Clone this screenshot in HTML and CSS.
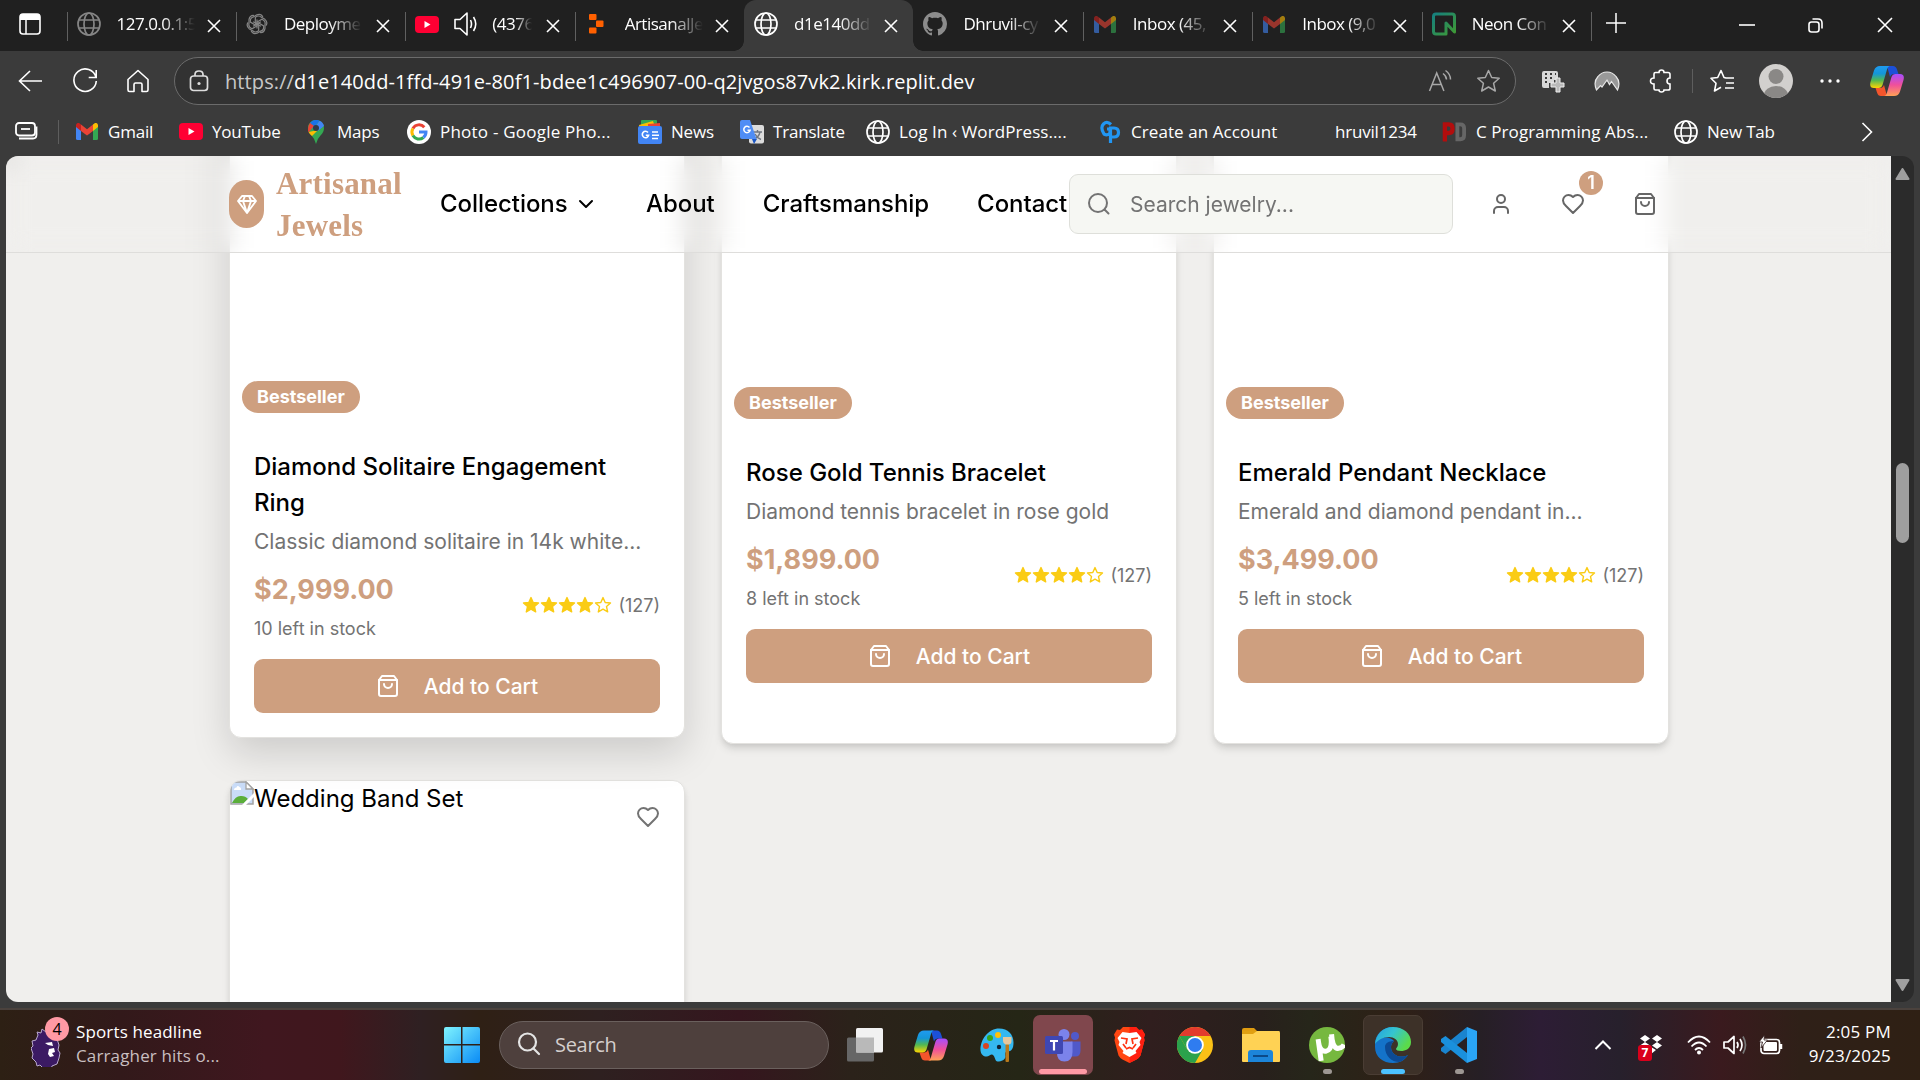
FILE: index.html
```html
<!DOCTYPE html>
<html lang="en">
<head>
<meta charset="utf-8">
<title>Artisanal Jewels</title>
<link rel="stylesheet" href="styles.css">
</head>
<body>
<svg class="defs" width="0" height="0">
  <defs>
    <symbol id="globe" viewBox="0 0 24 24"><g fill="none" stroke="currentColor" stroke-width="1.7"><circle cx="12" cy="12" r="11"/><ellipse cx="12" cy="12" rx="5" ry="11"/><path d="M2 8h20M2 16h20"/></g></symbol>
    <symbol id="x" viewBox="0 0 14 14"><path d="M1 1l12 12M13 1L1 13" stroke="currentColor" stroke-width="1.6" fill="none"/></symbol>
    <symbol id="gmail" viewBox="0 0 22 17"><path d="M0 3v12.500Q0 17 1.500 17H5V7z" fill="#4285f4"/><path d="M17 7v10h3.500q1.500 0 1.500-1.500V3z" fill="#34a853"/><path d="M17 1.500V8l5-4V2q-.5-2.500-3-2z" fill="#fbbc04"/><path d="M5 1.500V8L0 4V2Q.5-.5 3 0z" fill="#c5221f"/><path d="M5 8V1.500l6 4.700 6-4.700V8l-6 4.600z" fill="#ea4335"/></symbol>
    <symbol id="youtube" viewBox="0 0 24 17"><rect width="24" height="17" rx="4" fill="#ff0033"/><path d="M9.500 5v7l6-3.500z" fill="#fff"/></symbol>
    <symbol id="bag" viewBox="0 0 24 24"><g fill="none" stroke="currentColor" stroke-width="2" stroke-linecap="round" stroke-linejoin="round"><path d="M6 2 3 6v14a2 2 0 0 0 2 2h14a2 2 0 0 0 2-2V6l-3-4Z"/><path d="M3 6h18M16 10a4 4 0 0 1-8 0"/></g></symbol>
    <symbol id="heart" viewBox="0 0 24 24"><path d="M19 14c1.490-1.460 3-3.210 3-5.500A5.500 5.500 0 0 0 16.500 3c-1.760 0-3 .5-4.500 2-1.500-1.500-2.740-2-4.500-2A5.500 5.500 0 0 0 2 8.500c0 2.300 1.500 4.050 3 5.500l7 7Z" fill="none" stroke="currentColor" stroke-width="2" stroke-linejoin="round"/></symbol>
    <symbol id="star" viewBox="0 0 18 18"><path d="M9 1.600l2.200 4.900 5.300.5-4 3.600 1.200 5.300L9 13.200l-4.700 2.700 1.200-5.300-4-3.600 5.300-.5z" fill="#facc15" stroke="#facc15" stroke-width="1.400" stroke-linejoin="round"/></symbol>
    <symbol id="star-empty" viewBox="0 0 18 18"><path d="M9 1.600l2.200 4.900 5.300.5-4 3.600 1.200 5.300L9 13.200l-4.700 2.700 1.200-5.300-4-3.600 5.300-.5z" fill="none" stroke="#facc15" stroke-width="1.400" stroke-linejoin="round"/></symbol>
    <linearGradient id="cpA" x1="0" y1="0" x2="0" y2="1"><stop offset="0" stop-color="#1f9bf0"/><stop offset=".35" stop-color="#1496d8"/><stop offset=".65" stop-color="#52b852"/><stop offset="1" stop-color="#ffd500"/></linearGradient>
    <linearGradient id="cpB" x1="0" y1="0" x2="0" y2="1"><stop offset="0" stop-color="#a64dff"/><stop offset=".5" stop-color="#f0509a"/><stop offset="1" stop-color="#ffa256"/></linearGradient>
    <symbol id="copilot" viewBox="0 0 34 30"><path d="M17 0h6q3 0 4 3.500L28.500 8H24q-3 0-4 3z" fill="#1c50d8"/><path d="M17 30h-6q-3 0-4-3.500L5.500 22H10q3 0 4-3z" fill="#f4552c"/><path d="M10 0h10q-2 0-3 3.500L12.500 19q-1 3-4 3H4q-5 0-3.500-6L4 4.500Q5.500 0 10 0z" fill="url(#cpA)"/><path d="M24 30H14q2 0 3-3.500L21.500 11q1-3 4-3H30q5 0 3.500 6L30 25.500Q28.500 30 24 30z" fill="url(#cpB)"/></symbol>
    <linearGradient id="win" x1="0" y1="0" x2="1" y2="1"><stop offset="0" stop-color="#7ff4ff"/><stop offset="1" stop-color="#0a8bf5"/></linearGradient>
    <linearGradient id="edgeTop" x1="0" y1="0" x2="1" y2=".5"><stop offset="0" stop-color="#23a0e0"/><stop offset=".5" stop-color="#35c4d0"/><stop offset="1" stop-color="#5bdb4a"/></linearGradient>
  </defs>
</svg>

<div class="tabstrip">
  <div class="workspace"><svg width="22" height="22" viewBox="0 0 22 22"><rect x="1" y="1" width="20" height="20" rx="3" fill="none" stroke="#fff" stroke-width="1.600"/><path d="M1 4q0-3 3-3h14q3 0 3 3v3H1z" fill="#fff"/><path d="M7 7v14" stroke="#fff" stroke-width="1.500"/></svg></div>
  <div class="tab"><svg class="fav dim" width="24" height="24"><use href="#globe"/></svg><span class="title">127.0.0.1:5</span><svg class="x" width="14" height="14"><use href="#x"/></svg></div>
  <div class="tab"><svg class="fav dim" width="22" height="22" viewBox="0 0 22 22"><g fill="none" stroke="currentColor" stroke-width="1.200"><path d="M11 6.500V13l-5 2.800Q2 14 3 10.500V6.500Q4 2 8 2.500"/><path d="M11 6.500V13l-5 2.800Q2 14 3 10.500V6.500Q4 2 8 2.500" transform="rotate(60 11 11)"/><path d="M11 6.500V13l-5 2.800Q2 14 3 10.500V6.500Q4 2 8 2.500" transform="rotate(120 11 11)"/><path d="M11 6.500V13l-5 2.800Q2 14 3 10.500V6.500Q4 2 8 2.500" transform="rotate(180 11 11)"/><path d="M11 6.500V13l-5 2.800Q2 14 3 10.500V6.500Q4 2 8 2.500" transform="rotate(240 11 11)"/><path d="M11 6.500V13l-5 2.800Q2 14 3 10.500V6.500Q4 2 8 2.500" transform="rotate(300 11 11)"/></g></svg><span class="title">Deployme</span><svg class="x" width="14" height="14"><use href="#x"/></svg></div>
  <div class="tab"><svg class="fav" width="24" height="17"><use href="#youtube"/></svg><svg class="sound" width="24" height="26" viewBox="0 0 24 26"><g fill="none" stroke="#fff" stroke-width="1.600"><path d="M1 8.500h5L13 2v22l-7-6.500H1z" stroke-linejoin="round"/><path d="M16.500 9q2 4 0 8M19.500 6q4.500 7 0 14"/></g></svg><span class="title short">(4376</span><svg class="x" width="14" height="14"><use href="#x"/></svg></div>
  <div class="tab last"><svg class="fav" width="24" height="20" viewBox="0 0 24 20"><g fill="#ff6000"><rect x="4" y="0" width="7.500" height="6" rx="1"/><rect x="11" y="6.500" width="7.500" height="6.500" rx="1"/><rect x="4" y="13.500" width="7.500" height="6" rx="1"/></g></svg><span class="title">ArtisanalJe</span><svg class="x" width="14" height="14"><use href="#x"/></svg></div>
  <div class="tab active"><svg class="fav" width="24" height="24"><use href="#globe"/></svg><span class="title">d1e140dd</span><svg class="x" width="14" height="14"><use href="#x"/></svg></div>
  <div class="tab bare"><svg class="fav github" width="24" height="24" viewBox="0 0 16 16"><path fill="#8c8c8c" d="M8 0C3.580 0 0 3.580 0 8c0 3.540 2.290 6.530 5.470 7.590.4.070.55-.17.55-.38 0-.19-.01-.82-.01-1.490-2.010.37-2.530-.49-2.690-.94-.09-.23-.48-.94-.82-1.130-.28-.15-.68-.52-.01-.53.63-.01 1.080.58 1.230.82.720 1.210 1.870.87 2.330.66.07-.52.28-.87.51-1.070-1.780-.2-3.640-.89-3.640-3.950 0-.87.31-1.590.82-2.150-.08-.2-.36-1.020.08-2.120 0 0 .67-.21 2.200.82.640-.18 1.320-.27 2-.27s1.360.09 2 .27c1.530-1.040 2.200-.82 2.200-.82.44 1.100.16 1.920.08 2.120.51.56.82 1.270.82 2.150 0 3.070-1.870 3.750-3.650 3.950.29.25.54.73.54 1.480 0 1.070-.01 1.930-.01 2.200 0 .21.15.46.55.38A8.010 8.010 0 0 0 16 8c0-4.420-3.580-8-8-8"/></svg><span class="title">Dhruvil-cy</span><svg class="x" width="14" height="14"><use href="#x"/></svg></div>
  <div class="tab"><svg class="fav faded" width="24" height="17"><use href="#gmail"/></svg><span class="title">Inbox (45,</span><svg class="x" width="14" height="14"><use href="#x"/></svg></div>
  <div class="tab"><svg class="fav faded" width="24" height="17"><use href="#gmail"/></svg><span class="title">Inbox (9,0</span><svg class="x" width="14" height="14"><use href="#x"/></svg></div>
  <div class="tab"><svg class="fav" width="24" height="24" viewBox="0 0 24 24"><linearGradient id="neon" x1="0" y1="0" x2="1" y2="1"><stop offset="0" stop-color="#16807e"/><stop offset="1" stop-color="#3f9a34"/></linearGradient><path d="M14 22H4q-2.500 0-2.500-2.500v-15Q1.500 2 4 2h16q2.500 0 2.500 2.500V20L14 11z" fill="none" stroke="url(#neon)" stroke-width="3" stroke-linejoin="round"/></svg><span class="title">Neon Con</span><svg class="x" width="14" height="14"><use href="#x"/></svg></div>
  <div class="newtab"><svg width="20" height="20" viewBox="0 0 20 20"><path d="M10 0v20M0 10h20" stroke="#fff" stroke-width="1.500"/></svg></div>
  <div class="winctl">
    <svg width="16" height="16" viewBox="0 0 16 16"><path d="M0 8h16" stroke="#fff" stroke-width="1.600"/></svg>
    <svg width="16" height="16" viewBox="0 0 16 16"><g fill="none" stroke="#fff" stroke-width="1.600"><rect x="1" y="5" width="10" height="10" rx="2.500"/><path d="M4.500 2h5.500q4 0 4 4v5.500"/></g></svg>
    <svg width="16" height="16" viewBox="0 0 16 16"><path d="M1 1l14 14M15 1L1 15" stroke="#fff" stroke-width="1.600"/></svg>
  </div>
</div>

<div class="toolbar">
  <div class="nav">
    <svg width="26" height="24" viewBox="0 0 26 24"><path d="M13 2L2.500 12 13 22M2.500 12H25" fill="none" stroke="#fff" stroke-width="1.600"/></svg>
    <svg width="26" height="26" viewBox="0 0 26 26"><path d="M24 9.500A11.200 11.200 0 1 0 24.300 13M24.200 2v7.500h-7.500" fill="none" stroke="#fff" stroke-width="1.600"/></svg>
    <svg width="24" height="24" viewBox="0 0 24 24"><path d="M2 10.500L12 1.500l10 9V21q0 1.500-1.500 1.500h-4.500v-7q0-1.500-1.500-1.500h-5Q8 14 8 15.500v7H3.500Q2 22.500 2 21z" fill="none" stroke="#fff" stroke-width="1.600" stroke-linejoin="round"/></svg>
  </div>
  <div class="address">
    <svg width="20" height="22" viewBox="0 0 20 22"><g fill="none" stroke="#ddd" stroke-width="1.700"><rect x="1.500" y="6" width="17" height="14.500" rx="3"/><path d="M6 6V4.500Q6 1 10 1t4 3.500V6"/></g><circle cx="10" cy="13.500" r="1.600" fill="#ddd"/></svg>
    <span class="url"><span class="scheme">https://</span>d1e140dd-1ffd-491e-80f1-bdee1c496907-00-q2jvgos87vk2.kirk.replit.dev</span>
    <svg class="read" width="24" height="24" viewBox="0 0 24 24"><path d="M1.500 22L8.700 4l7.200 18M4 15.500h9.500M15 4.500q3.500 2.500 3.500 6M17.500 1.500q5 3.500 5 9" fill="none" stroke="#a8a8a8" stroke-width="1.500"/></svg>
    <svg width="25" height="24" viewBox="0 0 24 24"><path d="M12 1.500l3.200 7 7.500.8-5.600 5 1.700 7.700L12 18l-6.800 4 1.700-7.700-5.600-5 7.500-.8z" fill="none" stroke="#a8a8a8" stroke-width="1.500" stroke-linejoin="round"/></svg>
  </div>
  <div class="exts">
    <svg width="24" height="24" viewBox="0 0 24 24"><path d="M1 4q0-2 2-2h12q2 0 2 2v7h-4v3H8v5H3q-2 0-2-2z" fill="#d8d8d8"/><path d="M4 5h2m3 0h2m3 0h1M4 9h2m3 0h2M4 13h2" stroke="#3b3b3b" stroke-width="2"/><path d="M15 9h4v5h4v4h-4v5h-4v-5h-5v-4h5z" fill="#b9b9b9" stroke="#eee" stroke-width="1"/></svg>
    <svg width="26" height="24" viewBox="0 0 26 24"><path d="M2.500 21Q-1 13 4 7.500 7.500 3 13 3t9 4.500Q27 13 23.500 21l-6-8.500-2 3L13 11l-5 7-1.500-1.500z" fill="#999" stroke="#e8e8e8" stroke-width="1.200"/></svg>
    <svg width="24" height="24" viewBox="0 0 24 24"><path d="M5 5q0-1.500 1.500-1.500H10Q10 1 12.500 1T15 3.500h4q2 0 2 2V9q-3 0-3 3t3 3v4.500q0 1.500-2 1.500h-4q0 2-2.500 2T10 21H6.500Q5 21 5 19.500V15q-3.500 0-3.500-3T5 9z" fill="none" stroke="#fff" stroke-width="1.600"/></svg>
    <i class="sep"></i>
    <svg width="25" height="24" viewBox="0 0 25 24"><path d="M16 9L14 8.500 11 1.500 7.700 8.500 1 9.300l5 5L4.500 22l6.500-3.800M15 9h9M16 14h8M15 19h9" fill="none" stroke="#fff" stroke-width="1.600" stroke-linejoin="round"/></svg>
    <svg width="34" height="34" viewBox="0 0 34 34"><clipPath id="av"><circle cx="17" cy="17" r="17"/></clipPath><g clip-path="url(#av)"><rect width="34" height="34" fill="#d2d0ce"/><circle cx="17" cy="12.500" r="7.500" fill="#8a8886"/><ellipse cx="17" cy="31" rx="12" ry="9" fill="#8a8886"/></g></svg>
    <svg width="20" height="6" viewBox="0 0 20 6"><g fill="#fff"><circle cx="2" cy="3" r="1.700"/><circle cx="10" cy="3" r="1.700"/><circle cx="18" cy="3" r="1.700"/></g></svg>
    <svg width="34" height="30"><use href="#copilot"/></svg>
  </div>
</div>

<div class="bookmarks">
  <div class="stack"><svg width="24" height="20" viewBox="0 0 24 20"><g fill="none" stroke="#fff" stroke-width="1.800"><rect x="1" y="1" width="19" height="12.500" rx="3"/><path d="M6 7h9"/><path d="M4 16.500h14q3.500 0 3.500-4V4.500"/></g></svg></div>
  <i class="sep"></i>
  <div class="marks">
    <div class="mark"><svg width="24" height="17"><use href="#gmail"/></svg><span>Gmail</span></div>
    <div class="mark"><svg width="24" height="17"><use href="#youtube"/></svg><span>YouTube</span></div>
    <div class="mark"><svg width="24" height="24" viewBox="0 0 24 24"><path d="M12 24Q11 19 7.500 15.500 4 12 4 8a8 8 0 0 1 16 0q0 4-3.500 7.500Q13 19 12 24z" fill="#34a853"/><path d="M6 3a8 8 0 0 1 9.500-2.300L9 9z" fill="#1a73e8"/><path d="M6 3l4 3-5.500 6.500Q3 7 6 3z" fill="#ea4335"/><path d="M4.600 12L14 10l-6 6q-2.500-2-3.400-4z" fill="#fbbc04"/><path d="M15.500.7Q19 2 20 6l-6 5-3-4z" fill="#4285f4"/><circle cx="12" cy="8" r="3" fill="#303a48"/></svg><span>Maps</span></div>
    <div class="mark looser"><svg width="24" height="24" viewBox="0 0 24 24"><circle cx="12" cy="12" r="12" fill="#fff"/><g fill="none" stroke-width="3"><path d="M17.300 7.200A7 7 0 0 0 5.900 8.500" stroke="#ea4335"/><path d="M5.900 8.500a7 7 0 0 0 0 7" stroke="#fbbc04"/><path d="M5.900 15.500a7 7 0 0 0 10.500 2" stroke="#34a853"/><path d="M16.400 17.500A7 7 0 0 0 19 12h-7" stroke="#4285f4"/></g></svg><span>Photo - Google Pho...</span></div>
    <div class="mark"><svg width="24" height="24" viewBox="0 0 24 24"><rect x="3" y="0" width="16" height="8" rx="1" fill="#34a853"/><path d="M1 5l14-4 3 9H2z" fill="#fbbc04"/><path d="M10 4l12-1v8H10z" fill="#ea4335"/><rect y="6" width="24" height="18" rx="2" fill="#4285f4"/><path d="M10 12.500a3.200 3.200 0 1 0 .6 2.800H7.800M14 12h6M14 15.300h7M14 18.500h6" fill="none" stroke="#fff" stroke-width="1.600"/></svg><span>News</span></div>
    <div class="mark"><svg width="24" height="24" viewBox="0 0 24 24"><rect x="9" y="5" width="15" height="18.500" rx="2" fill="#dcdcdc"/><path d="M13 12h9M17.500 10v2M20 12q-1 5-6 7M15 14q2 4 6 5.500" fill="none" stroke="#6f7680" stroke-width="1.400"/><path d="M12 19h5l-3 5z" fill="#1a56c4"/><path d="M2 0h8l6.500 19H2q-2 0-2-2V2q0-2 2-2z" fill="#4f8df5"/><path d="M9.500 7.500a3.200 3.200 0 1 0 .6 2.800H7.500" fill="none" stroke="#fff" stroke-width="1.500"/></svg><span>Translate</span></div>
    <div class="mark loose"><svg width="24" height="24"><use href="#globe"/></svg><span>Log In ‹ WordPress....</span></div>
    <div class="mark loose"><svg width="24" height="24" viewBox="0 0 24 24"><path d="M13 4.500Q9 .5 5.500 4T6 14q3.500 2 6-1V9H9M12.500 23V8h3.500q4.500 0 4.500 4.500T16 17h-3" fill="none" stroke="#2196f3" stroke-width="3.200"/></svg><span>Create an Account</span></div>
    <div class="mark"><svg width="24" height="24"></svg><span>hruvil1234</span></div>
    <div class="mark loose"><svg width="25" height="22" viewBox="0 0 26 22"><path d="M3 21V3h4q4 0 4 4.500T7 12H3" fill="none" stroke="#b30d0d" stroke-width="4.500"/><path d="M16 3h3q4 0 4 4v7q0 4.500-4 4.500h-3z" fill="none" stroke="#666" stroke-width="4"/></svg><span>C Programming Abs...</span></div>
    <div class="mark"><svg width="24" height="24"><use href="#globe"/></svg><span>New Tab</span></div>
  </div>
  <svg width="12" height="20" viewBox="0 0 12 20"><path d="M1.500 1l9 9-9 9" fill="none" stroke="#fff" stroke-width="1.600"/></svg>
</div>

<div class="frame">
  <div class="viewport">
    <header class="site-header">
      <div class="container bar">
        <div class="logo"><svg width="24" height="24" viewBox="0 0 24 24"><path d="M7 4h10l4 5-9 12L3 9zM3 9h18M10 4L8 9l4 12 4-12-2-5" fill="none" stroke="#fff" stroke-width="1.900" stroke-linejoin="round"/></svg></div>
        <div class="brand">Artisanal<br>Jewels</div>
        <nav class="menu">
          <span class="collections"><span>Collections</span> <svg width="24" height="24" viewBox="0 0 24 24"><path d="M6 9l6 6 6-6" fill="none" stroke="#000" stroke-width="2" stroke-linecap="round" stroke-linejoin="round"/></svg></span>
          <span>About</span><span>Craftsmanship</span><span>Contact</span>
        </nav>
        <div class="search"><svg width="24" height="24" viewBox="0 0 24 24"><g fill="none" stroke="#737373" stroke-width="2" stroke-linecap="round"><circle cx="11" cy="11" r="9"/><path d="M21.500 21.500l-4-4"/></g></svg><span>Search jewelry...</span></div>
        <div class="actions">
          <span class="act"><svg width="24" height="24" viewBox="0 0 24 24"><g fill="none" stroke="#666" stroke-width="2" stroke-linecap="round"><circle cx="12" cy="7" r="4"/><path d="M19 21v-2a4 4 0 0 0-4-4H9a4 4 0 0 0-4 4v2"/></g></svg></span>
          <span class="act"><svg width="24" height="24"><use href="#heart"/></svg><b class="count">1</b></span>
          <span class="act"><svg width="24" height="24"><use href="#bag"/></svg></span>
        </div>
      </div>
    </header>
    <main class="container grid">
      <article class="card hovered">
        <div class="photo"><span class="badge">Bestseller</span></div>
        <div class="body">
          <h3>Diamond Solitaire Engagement Ring</h3>
          <p class="desc">Classic diamond solitaire in 14k white...</p>
          <div class="row"><div><div class="price">$2,999.00</div><div class="stock">10 left in stock</div></div>
            <div class="rating"><svg width="18" height="18"><use href="#star"/></svg><svg width="18" height="18"><use href="#star"/></svg><svg width="18" height="18"><use href="#star"/></svg><svg width="18" height="18"><use href="#star"/></svg><svg width="18" height="18"><use href="#star-empty"/></svg><span>(127)</span></div></div>
          <button class="add"><svg width="24" height="24"><use href="#bag"/></svg><span>Add to Cart</span></button>
        </div>
      </article>
      <article class="card">
        <div class="photo"><span class="badge">Bestseller</span></div>
        <div class="body">
          <h3>Rose Gold Tennis Bracelet</h3>
          <p class="desc">Diamond tennis bracelet in rose gold</p>
          <div class="row"><div><div class="price">$1,899.00</div><div class="stock">8 left in stock</div></div>
            <div class="rating"><svg width="18" height="18"><use href="#star"/></svg><svg width="18" height="18"><use href="#star"/></svg><svg width="18" height="18"><use href="#star"/></svg><svg width="18" height="18"><use href="#star"/></svg><svg width="18" height="18"><use href="#star-empty"/></svg><span>(127)</span></div></div>
          <button class="add"><svg width="24" height="24"><use href="#bag"/></svg><span>Add to Cart</span></button>
        </div>
      </article>
      <article class="card">
        <div class="photo"><span class="badge">Bestseller</span></div>
        <div class="body">
          <h3>Emerald Pendant Necklace</h3>
          <p class="desc">Emerald and diamond pendant in...</p>
          <div class="row"><div><div class="price">$3,499.00</div><div class="stock">5 left in stock</div></div>
            <div class="rating"><svg width="18" height="18"><use href="#star"/></svg><svg width="18" height="18"><use href="#star"/></svg><svg width="18" height="18"><use href="#star"/></svg><svg width="18" height="18"><use href="#star"/></svg><svg width="18" height="18"><use href="#star-empty"/></svg><span>(127)</span></div></div>
          <button class="add"><svg width="24" height="24"><use href="#bag"/></svg><span>Add to Cart</span></button>
        </div>
      </article>
      <article class="card next">
        <div class="missing"><svg width="24" height="24" viewBox="0 0 24 24"><path d="M1 1h15l7 7v15H1z" fill="#c9dcf8" stroke="#a3a3a3" stroke-width="1.500"/><path d="M16 1v7h7z" fill="#fff" stroke="#a3a3a3" stroke-width="1.300"/><path d="M4 9q0-2.500 2.500-2.500Q7.500 4 9.500 6q2 .5 1.500 3z" fill="#fff"/><path d="M2 22q4-8 9.500-7 4 0 6.500 3l-4 4z" fill="#5aae3a"/><path d="M24 12L12 24h4l8-8z" fill="#fff"/></svg><span>Wedding Band Set</span></div>
        <svg class="wish" width="24" height="24"><use href="#heart"/></svg>
      </article>
    </main>
  </div>
  <div class="scrollbar"><svg width="15" height="12" viewBox="0 0 15 12"><path d="M7.500 1l6 10h-12z" fill="#9f9f9f" stroke="#9f9f9f" stroke-linejoin="round" stroke-width="2"/></svg><i class="thumb"></i><svg width="15" height="12" viewBox="0 0 15 12"><path d="M7.500 11l6-10h-12z" fill="#9f9f9f" stroke="#9f9f9f" stroke-linejoin="round" stroke-width="2"/></svg></div>
</div>

<footer class="taskbar">
  <div class="widget">
    <div class="lion"><svg width="30" height="40" viewBox="0 0 30 40"><path d="M7 8l-1-3 4 1 1-4 4 3 3-2v5l8 4 2 6-1 5 2 3-1 5-2 6-5 2-1 3-8-1-3-3-3 1-1-4-4-4 1-4-2-6 2-2-1-5 4-1z" fill="#3b1a63" stroke="#b9a9cf" stroke-width="1"/><path d="M14 16l7-1 1 4-5-1zM18 22l5-1 1 4-3 1 2 3-4 1-2-3z" fill="#fff"/></svg><b class="alert">4</b></div>
    <div class="news"><div>Sports headline</div><div class="sub">Carragher hits o...</div></div>
  </div>
  <svg width="36" height="36" viewBox="0 0 36 36"><path d="M2 0h15v17H0V2q0-2 2-2zM18.500 0H34q2 0 2 2v15H18.500zM0 18.500h17V36H2q-2 0-2-2zM18.500 18.500H36V34q0 2-2 2H18.500z" fill="url(#win)"/></svg>
  <div class="tsearch"><svg width="24" height="24" viewBox="0 0 24 24"><g fill="none" stroke="#e4e4e4" stroke-width="2.200" stroke-linecap="round"><circle cx="10.500" cy="10" r="8.500"/><path d="M16.500 16.500l5.500 5.500"/></g></svg><span>Search</span></div>
  <div class="apps">
    <div class="app"><svg width="36" height="34" viewBox="0 0 36 34"><rect y="9.500" width="27" height="24" rx="1.500" fill="#666"/><rect x="9" width="27" height="24.500" rx="1.500" fill="#f1f1f1"/><path d="M9 9.500h18v15H9z" fill="#b9b9b9"/></svg></div>
    <div class="app"><svg width="34" height="31"><use href="#copilot"/></svg></div>
    <div class="app"><svg width="34" height="34" viewBox="0 0 34 34"><path d="M19 .5c9 0 14.500 6 14.500 14 0 6-2 9-6 9-3 0-2 3-2 5 0 3-4 5-8 5-2 0-2-3-4-6s-4 1-7 1-5.500-2-6-6C0 11 9 .5 19 .5z" fill="#35b8f0"/><circle cx="18" cy="7" r="3" fill="#ffc107"/><circle cx="10" cy="10" r="3" fill="#34a51f"/><circle cx="6" cy="18" r="3" fill="#d9441f"/><circle cx="19" cy="19" r="2.200" fill="#123"/><rect x="25.500" y="16" width="3.500" height="18" rx="1" fill="#b97a1c"/><path d="M23 9h8.500v4q0 3-2.500 3.500h-3.500q-2.500-1-2.500-3.500z" fill="#e5c79d"/></svg></div>
    <div class="app teams"><svg width="36" height="33" viewBox="0 0 36 33"><circle cx="30" cy="7" r="4" fill="#5059c9"/><path d="M26 12.500h9.500v9q0 6-5 6h-4.500z" fill="#5059c9"/><circle cx="19" cy="5.500" r="5.500" fill="#7b83eb"/><path d="M12 12.500h15.500V23q0 9.500-8 9.500T12 23z" fill="#7b83eb"/><rect y="7" width="18" height="18" rx="1.500" fill="#3f47b3"/><path d="M5 12h8M9 12v9.500" stroke="#fff" stroke-width="2.200"/></svg><i></i></div>
    <div class="app"><svg width="31" height="36" viewBox="0 0 31 36"><path d="M9 0h13l3 3 3-.5 3 5-1 3 .5 3-4 15q-1 2-4 4L15.500 36l-7-3.500q-3-2-4-4l-4-15 .5-3-1-3 3-5L6 3z" fill="#ff4612"/><path d="M15.500 0H22l3 3 3-.5 3 5-1 3 .5 3-4 15q-1 2-4 4L15.500 36z" fill="#ff1e10"/><path d="M15.500 6l7-1 5 6-2 4 1 3-5 6 1 2-7 4-7-4 1-2-5-6 1-3-2-4 5-6z" fill="#fff"/><path d="M7 11l6 1-1 5M24 11l-6 1 1 5M12 22l3.500-1.500L19 22M9 17l3 4M22 17l-3 4" fill="none" stroke="#ff3311" stroke-width="1.700"/></svg></div>
    <div class="app"><svg width="36" height="36" viewBox="0 0 36 36"><circle cx="18" cy="18" r="18" fill="#fbc116"/><path d="M2.400 9A18 18 0 0 1 33.600 9H18z" fill="#e33b2e"/><path d="M2.400 9A18 18 0 0 0 18 36l7.800-13.500H10.200z" fill="#2ba24c"/><path d="M2.400 9l7.800 13.500L18 9z" fill="#2ba24c"/><circle cx="18" cy="18" r="8.800" fill="#fff"/><circle cx="18" cy="18" r="7" fill="#2f7cf0"/></svg></div>
    <div class="app"><svg width="38" height="34" viewBox="0 0 38 34"><path d="M0 2q0-2 2-2h10l4 4H0z" fill="#e09c10"/><path d="M0 6V4q0-1 2-1h35q1 0 1 2v28q0 1-1 1H1q-1 0-1-1z" fill="#ffd254"/><path d="M0 6h11l4-3H0z" fill="#e0a012"/><path d="M6 34V25q0-3 3-3h19q3 0 3 3v9z" fill="#1c85da"/><path d="M11 28h15" stroke="#0b4a8a" stroke-width="2"/></svg></div>
    <div class="app"><svg width="36" height="36" viewBox="0 0 36 36"><circle cx="18" cy="18" r="18" fill="#76b83f"/><path d="M10 11v22M10 14q0 10 6 10 7 0 7-14M24 8q-1 13 4 15 5 0 7-3" fill="none" stroke="#fff" stroke-width="5" transform="rotate(-8 18 18)"/></svg><i></i></div>
    <div class="app edge"><svg width="36" height="36" viewBox="0 0 36 36"><path d="M18 0C7 0 0 8 0 17v3C0 30 8 36 18 36c7 0 12-3 15-8-8 4-17 0-17-8 0-3 2-5 3-6-4-5-14-5-19 3" fill="#1473c9"/><path d="M10 20c0 9 7 15 14 15 4-1 7-4 9-7-8 4-17 0-17-8 0-3 1-4 3-6-5 0-9 2-9 6z" fill="#0c4a94"/><path d="M0 17C1 7 8 0 18 0c11 0 18 7 18 15 0 7-6 9-10 9-3 0-5-1-5-2s2-2 2-5c0-4-4-7-9-7-6 0-11 3-14 7z" fill="url(#edgeTop)"/></svg><i></i></div>
    <div class="app"><svg width="36" height="36" viewBox="0 0 36 36"><path d="M26 0l10 4v28l-10 4z" fill="#2aa4f4"/><path d="M26 0v10L4.500 27 0 24v-3z" fill="#1a84cf"/><path d="M26 36V26L4.500 9 0 12v3z" fill="#1a90dd"/></svg><i></i></div>
  </div>
  <div class="tray">
    <svg width="18" height="12" viewBox="0 0 18 12"><path d="M1.500 10L9 2.500l7.500 7.500" fill="none" stroke="#fff" stroke-width="2"/></svg>
    <span class="drop"><svg width="24" height="20" viewBox="0 0 24 20"><path d="M6 0l5 3.500L6 7 1 3.500zM18 0l5 3.500L18 7l-5-3.500zM18 7l5 3.500-5 3.500-5-3.500zM6 7l5 3.500L6 14l-5-3.500zM12 12l5 3-5 4-5-4z" fill="#fff"/></svg><b>7</b></span>
    <svg width="24" height="20" viewBox="0 0 24 20"><g fill="none" stroke="#fff" stroke-width="1.800"><path d="M1 7.500q11-12 22 0M4.500 11.500q7.500-8 15 0M8 15q4-4 8 0"/></g><circle cx="12" cy="17.500" r="2" fill="#fff"/></svg>
    <svg width="24" height="20" viewBox="0 0 24 20"><g fill="none" stroke="#fff" stroke-width="1.700"><path d="M1 7h4l6-5.500v17L5 13H1z" stroke-linejoin="round"/><path d="M14 7q2 3 0 6M17 4q4 6 0 12"/><path d="M20 1.500q5 8.500 0 17" stroke="#777"/></g></svg>
    <svg width="24" height="20" viewBox="0 0 24 20"><rect x="2" y="4.500" width="18.500" height="14" rx="3" fill="none" stroke="#fff" stroke-width="1.700"/><rect x="4.500" y="7" width="13.500" height="9" rx="1" fill="#fff"/><path d="M22 9v5" stroke="#fff" stroke-width="2.500"/><path d="M5.500 0L0 7h3.500L2 13l6.500-8H5z" fill="#fff" stroke="#33201f" stroke-width=".8"/></svg>
    <div class="clock"><div>2:05 PM</div><div>9/23/2025</div></div>
  </div>
</footer>
</body>
</html>
```
FILE: styles.css
```css
* { box-sizing: border-box; }
html, body { margin: 0; height: 100%; overflow: hidden; }
body { display: flex; flex-direction: column; width: 1920px; height: 1080px; background: #3b3b3b; color: #fff; font-family: "Open Sans", "Noto Sans", sans-serif; font-size: 17px; }
svg { display: block; flex: none; }
.defs { position: absolute; }
i { display: block; }

/* tab strip */
.tabstrip { display: flex; height: 51px; flex: none; background: #202020; }
.workspace { width: 66.500px; padding: 13px 0 0 19px; }
.tab { display: flex; align-items: center; width: 169.400px; flex: none; height: 51px; padding: 0 15px 3px 10px; background: linear-gradient(#606060, #606060) 0 12px / 1px 29px no-repeat; }
.tab.active { position: relative; background: #3b3b3b; border-radius: 12px 12px 0 0; }
.tab.active::before, .tab.active::after { content: ""; position: absolute; bottom: 0; width: 10px; height: 10px; }
.tab.active::before { left: -10px; background: radial-gradient(circle at 0 0, #202020 9.500px, #3b3b3b 10px); }
.tab.active::after { right: -10px; background: radial-gradient(circle at 100% 0, #202020 9.500px, #3b3b3b 10px); }
.tab.bare { background: none; }
.newtab { background: linear-gradient(#606060, #606060) 0 12px / 1px 29px no-repeat; padding: 13px 0 0 15px; width: 132px; }
.fav { margin-right: 16px; }
.fav.dim { color: #858585; }
.fav.faded { opacity: .6; }
.sound { margin: 0 14px 0 -1px; }
.title { width: 78px; overflow: hidden; white-space: nowrap; -webkit-mask-image: linear-gradient(90deg, #000 58%, transparent); mask-image: linear-gradient(90deg, #000 58%, transparent); letter-spacing: -.5px; margin-top: -2px; }
.title.short { width: 40px; }
.tab .x { margin: 3px 0 0 auto; }
.winctl { display: flex; gap: 53px; padding: 17px 0 0 16px; }

/* toolbar */
.toolbar { display: flex; align-items: center; height: 60px; flex: none; padding-left: 17px; }
.nav { display: flex; align-items: center; gap: 28.500px; width: 157px; }
.address { display: flex; align-items: center; width: 1342px; height: 48px; padding: 0 14px; border: 1.500px solid #6b6b6b; border-radius: 24px; background: #323232; }
.url { margin-left: 16px; margin-right: auto; font-size: 20px; letter-spacing: .1px; white-space: nowrap; }
.scheme { color: #c8c8c8; }
.read { margin-right: 24px; }
.exts { display: grid; grid-template-columns: 54px 54px 54px 8px 52px 56px 52px 62px; align-items: center; justify-items: center; margin-left: 10px; }
.sep { width: 1px; height: 24px; background: #5e5e5e; }

.bookmarks { display: flex; align-items: center; height: 45px; flex: none; padding: 0 0 4px 15px; }
.bookmarks .sep { margin: 0 16px 0 19px; height: 24px; }
.marks { display: grid; grid-template-columns: 104px 125px 103px 231px 102px 126px 232px 204px 140px 232px 187px; }
.mark { display: flex; align-items: center; gap: 9px; white-space: nowrap; letter-spacing: -.2px; }
.mark.loose { letter-spacing: .08px; }
.mark.looser { letter-spacing: .22px; }

/* page */
.frame { display: flex; height: 846px; flex: none; padding: 0 6px; }
.viewport { width: 1885px; overflow: hidden; border-radius: 12px 0 0 12px; background: #f0efed; color: #000; font-family: Inter, "Liberation Sans", sans-serif; }
.container { width: 1440px; margin-left: 223px; }
.site-header { position: relative; z-index: 2; height: 97px; border-bottom: 1px solid #dedddb; backdrop-filter: blur(12px); }
.bar { display: flex; align-items: center; height: 96px; }
.logo { display: flex; align-items: center; justify-content: center; width: 35px; height: 48px; border-radius: 18px; background: #ce9f7f; }
.brand { width: 164px; margin-left: 12px; color: #ce9f7f; font: bold 31px/42px "Liberation Serif", serif; letter-spacing: .2px; padding-top: 2px; }
.menu { display: flex; gap: 48px; width: 629px; font-size: 24px; font-weight: 500; letter-spacing: -.06px; margin-top: -1px; }
.collections { display: flex; align-items: center; gap: 6.500px; }
.search { display: flex; align-items: center; gap: 19px; width: 384px; height: 60px; padding-left: 17px; border: 1.500px solid #dedfda; border-radius: 9px; background: #f6f7f3; color: #737373; font-size: 21px; }
.actions { display: flex; gap: 48px; margin-left: 36px; color: #666; }
.act { position: relative; }
.count { position: absolute; left: 18px; top: -33px; width: 24px; height: 24px; border-radius: 50%; background: #ce9f7f; color: #fff; font-size: 18px; font-weight: 600; line-height: 24px; text-align: center; }
.count { top: -21px; }

.grid { display: grid; grid-template-columns: repeat(3, 456px); gap: 36px; margin-top: -156px; }
.card { border: 1px solid #e3e2df; border-radius: 12px; background: #fff; box-shadow: 0 6px 9px -1px rgba(0,0,0,.1), 0 3px 6px -2px rgba(0,0,0,.1); height: 647px; }
.card.hovered { position: relative; top: -6px; box-shadow: 0 15px 38px rgba(0,0,0,.15); }
.photo { display: flex; align-items: flex-end; height: 333px; padding: 0 0 12px 12px; }
.badge { height: 32px; padding: 0 15px; border-radius: 16px; background: #ce9f7f; color: #fff; font-size: 18px; font-weight: 700; line-height: 32px; }
.body { padding: 24px; }
.body h3 { margin: 0; font-size: 24px; line-height: 36px; font-weight: 500; }
.desc { margin: 6px 0 12px; color: #737373; font-size: 21px; line-height: 30px; white-space: nowrap; }
.row { display: flex; align-items: center; justify-content: space-between; }
.price { color: #ce9f7f; font-size: 27px; line-height: 42px; font-weight: 700; }
.stock { margin-top: 6px; color: #737373; font-size: 18px; line-height: 24px; }
.rating { display: flex; align-items: center; color: #737373; font-size: 18px; }
.rating span { margin-left: 6px; }
.add { display: flex; align-items: center; justify-content: center; gap: 24px; width: 100%; height: 54px; margin-top: 18px; border: 0; border-radius: 9px; background: #ce9f7f; color: #fff; font: 500 21px Inter, sans-serif; }
.next { display: flex; justify-content: space-between; overflow: hidden; }
.missing { display: flex; font-size: 24px; line-height: 36px; }
.wish { margin: 24px 24px 0 0; color: #737373; }

.scrollbar { display: flex; flex-direction: column; align-items: center; width: 23px; padding: 12px 0 11px; background: #2b2b2b; border-radius: 0 12px 12px 0; }
.thumb { width: 13px; height: 80px; margin: 283px 0 auto; border-radius: 7px; background: #9f9f9f; }

/* taskbar */
.taskbar { display: flex; align-items: center; height: 72px; margin-top: 6px; border-top: 2px solid #4b423d; background: linear-gradient(90deg, #2d2014 0, #32191a 120px, #40171f 265px, #40171d 340px, #2f2022 420px, #2f2015 480px, #2e2020 600px, #35161e 740px, #2b221a 850px, #252616 1020px, #301e1e 1150px, #28201c 1260px, #26261a 1310px, #2f2016 1400px, #261f25 1480px, #2d1d35 1540px, #27202c 1620px, #3a1a1e 1720px, #2f2018 1800px, #2f2014 1920px); }
.widget { display: flex; align-items: center; width: 444px; padding-left: 31px; }
.lion { position: relative; width: 45px; padding-top: 4px; }
.alert { position: absolute; left: 14px; top: -6px; width: 24px; height: 24px; border-radius: 50%; background: #ff99a4; color: #000; font-size: 16px; font-weight: 400; line-height: 24px; text-align: center; }
.news { line-height: 24px; letter-spacing: .14px; margin-top: -3px; }
.sub { color: #c9bfc0; }
.tsearch { display: flex; align-items: center; gap: 14px; width: 330px; height: 48px; margin-left: 19px; padding: 0 0 2px 17px; border: 1.500px solid #6a605d; border-radius: 24px; background: #4e403d; color: #d5cfcd; font-size: 20px; letter-spacing: -.3px; }
.apps { display: flex; gap: 6px; margin-left: 6px; }
.app { position: relative; display: flex; align-items: center; justify-content: center; width: 60px; height: 60px; border-radius: 7px; }
.app i { position: absolute; bottom: 1px; width: 9px; height: 5px; border-radius: 3px; background: #9d9793; }
.app.teams { background: #80474d; }
.app.teams i { width: 48px; background: #ff99a4; }
.app.edge { background: #3d3128; border: 1px solid #4a3d34; }
.app.edge i { width: 24px; background: #4cc2ff; bottom: 0; }
.tray { display: flex; align-items: center; margin-left: 105px; flex: 1; }
.tray > svg:nth-child(1) { margin-right: 27px; }
.drop { position: relative; margin-right: 24px; }
.drop b { position: absolute; left: -1px; top: 10px; width: 14px; height: 16px; border-radius: 3px; background: #d9001b; font-size: 12px; line-height: 16px; text-align: center; }
.tray > svg:nth-child(3), .tray > svg:nth-child(4) { margin-right: 12px; }
.clock { margin: -3px 29px 0 auto; text-align: right; line-height: 24px; letter-spacing: .2px; }
```
